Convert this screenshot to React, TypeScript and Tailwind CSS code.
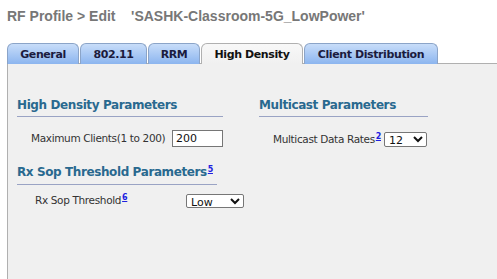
import { useState } from "react";

const tabs = [
  { name: "General", w: "w-[72px]" },
  { name: "802.11", w: "w-[67px]" },
  { name: "RRM", w: "w-[52px]" },
  { name: "High Density", w: "w-[102px]" },
  { name: "Client Distribution", w: "w-[134px]" },
];

export default function App() {
  const [active, setActive] = useState("High Density");
  const [maxClients, setMaxClients] = useState("200");

  const heading = "text-[12px] font-bold text-[#29698f] tracking-[-0.4px] leading-[15px] whitespace-nowrap";
  const label = "shrink-0 text-[10.5px] tracking-[-0.35px] text-[#333] whitespace-nowrap";
  const sup = "text-[8px] font-bold text-[#2020e0] underline ml-px";

  return (
    <div className="w-[497px] h-[279px] overflow-hidden bg-white font-['DejaVu_Sans',sans-serif]">
      <h1 className="pl-[7px] pt-[8px] h-[43px] text-[14px] leading-[16px] font-bold text-[#777777] font-['Liberation_Sans',Arial,sans-serif] whitespace-pre">
        RF Profile &gt; Edit    'SASHK-Classroom-5G_LowPower'
      </h1>

      {/* tab strip */}
      <div className="flex gap-px pl-[7px] h-[21px]">
        {tabs.map((t) => {
          const on = t.name === active;
          return (
            <button
              key={t.name}
              onClick={() => setActive(t.name)}
              className={
                on
                  ? `${t.w} relative z-10 h-[21px] rounded-t-[6px] border border-b-0 border-[#b0b0b0] bg-gradient-to-b from-[#f8f8f8] to-[#f0f0f0] text-[11px] leading-[19px] font-bold text-[#111] tracking-[-0.4px] whitespace-nowrap`
                  : `${t.w} h-[21px] rounded-t-[6px] border border-b-0 border-[#8ba4c8] bg-gradient-to-b from-[#c8ddf9] to-[#8cb5ef] text-[11px] leading-[19px] font-bold text-[#1b1b3e] tracking-[-0.4px] whitespace-nowrap`
              }
            >
              {t.name}
            </button>
          );
        })}
      </div>

      {/* panel */}
      <div className="-mt-px h-[240px] ml-[7px] border-t border-l border-[#b0b0b0] bg-[#f0f0f0] pl-[9px] pt-[34px]">
        <div className="flex">
          <div className="w-[206px]">
            <h2 className={heading}>High Density Parameters</h2>
            <div className="mt-[3px] h-px bg-[#9aa3c4]" />
            <div className="flex items-center mt-[13px] pl-[14px]">
              <span className={`${label} w-[141px]`}>Maximum Clients(1 to 200)</span>
              <input
                value={maxClients}
                onChange={(e) => setMaxClients(e.target.value)}
                className="shrink-0 w-[51px] h-[17px] border border-[#767676] bg-white px-[3px] text-[11px] text-[#111] outline-none"
              />
            </div>
          </div>

          <div className="ml-[36px] w-[169px]">
            <h2 className={heading}>Multicast Parameters</h2>
            <div className="mt-[3px] h-px bg-[#9aa3c4]" />
            <div className="flex items-center h-[17px] mt-[14px] pl-[14px]">
              <span className={`${label} w-[111px]`}>
                Multicast Data Rates
                <sup className={sup}>2</sup>
              </span>
              <select className="shrink-0 w-[43px] h-[15px] border border-[#767676] rounded-[2px] bg-white text-[11px] text-[#111]">
                <option>12</option>
              </select>
            </div>
          </div>
        </div>

        <div className="mt-[17px]">
          <h2 className={heading}>
            Rx Sop Threshold Parameters
            <sup className={sup}>5</sup>
          </h2>
          <div className="mt-[4px] w-[200px] h-px bg-[#9aa3c4]" />
          <div className="flex items-center mt-[8px] pl-[18px]">
            <span className={`${label} w-[151px]`}>
              Rx Sop Threshold
              <sup className={sup}>6</sup>
            </span>
            <select className="shrink-0 w-[58px] h-[14px] border border-[#767676] rounded-[2px] bg-white text-[11px] text-[#111]">
              <option>Low</option>
            </select>
          </div>
        </div>
      </div>
    </div>
  );
}
